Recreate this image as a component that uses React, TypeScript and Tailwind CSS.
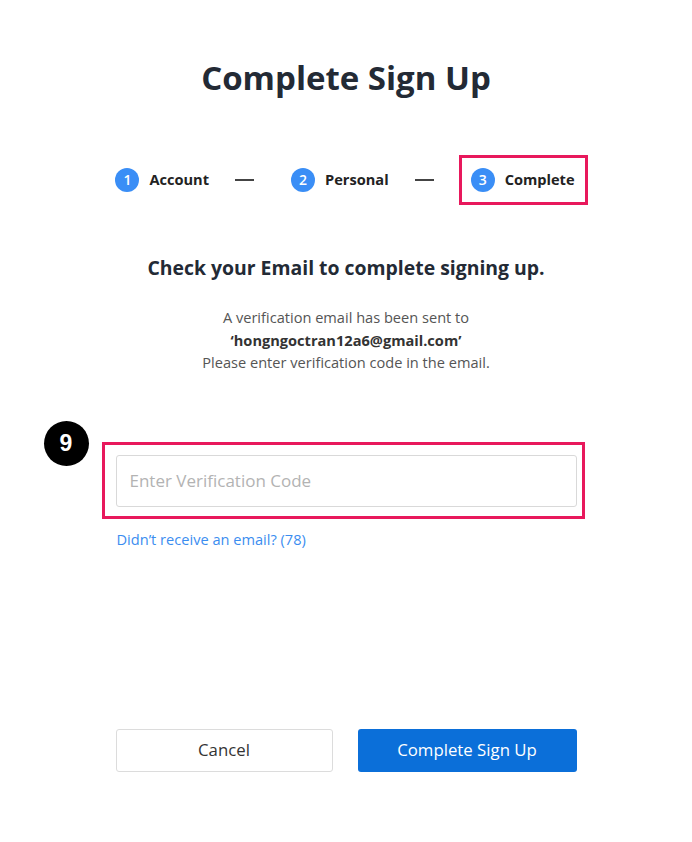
import React from "react";

const steps = [
    { n: 1, label: "Account" },
    { n: 2, label: "Personal" },
    { n: 3, label: "Complete" },
];

function StepBadge({ n }: { n: number }) {
    return (
        <span className="flex h-6 w-6 items-center justify-center rounded-full bg-[#3a8ef6] text-[14px] font-semibold leading-none text-white">
            {n}
        </span>
    );
}

export default function App() {
    return (
        <div className="min-h-[842px] w-full bg-white font-['Open_Sans',sans-serif] text-[#232a35]">
            <div className="mx-auto flex w-[461px] flex-col items-center pt-[58px]">
                <h1 className="text-[33px] font-bold leading-[40px] text-[#232a35]">Complete Sign Up</h1>

                {/* Stepper */}
                <div className="mt-[70px] flex h-6 items-center pr-[2px] text-[14.6px] font-bold text-[#222]">
                    {steps.map((s, i) => (
                        <React.Fragment key={s.n}>
                            {s.n === 3 ? (
                                <div className="relative flex items-center gap-[10px]">
                                    <StepBadge n={s.n} />
                                    <span>{s.label}</span>
                                    <div className="pointer-events-none absolute -left-[12px] -right-[13px] -top-[13px] -bottom-[13px] border-[3px] border-[#e8185c]" />
                                </div>
                            ) : (
                                <div className="flex items-center gap-[10px]">
                                    <StepBadge n={s.n} />
                                    <span>{s.label}</span>
                                </div>
                            )}
                            {i < steps.length - 1 && (
                                <span className="ml-[26px] mr-[37px] h-[1.5px] w-[19px] bg-[#444]" />
                            )}
                        </React.Fragment>
                    ))}
                </div>

                <h2 className="mt-[63px] text-[19.4px] font-bold leading-[26px] text-[#232a35]">
                    Check your Email to complete signing up.
                </h2>

                <div className="mt-[25px] text-center text-[14.6px] leading-[22.5px] text-[#555]">
                    <p>A verification email has been sent to</p>
                    <p className="font-bold text-[#333]">‘hongngoctran12a6@gmail.com’</p>
                    <p>Please enter verification code in the email.</p>
                </div>

                {/* Verification input */}
                <div className="relative mt-[81px] w-full">
                    <input
                        className="h-[52px] w-full rounded-[3px] border border-[#d9d9d9] px-[13px] text-[17px] text-[#333] outline-none placeholder:text-[#b3b3b3]"
                        placeholder="Enter Verification Code"
                    />
                    <div className="pointer-events-none absolute -left-[14px] -right-[8px] -top-[13px] -bottom-[12px] border-[3px] border-[#e8185c]" />
                    <div className="absolute -left-[72px] -top-[34px] flex h-[45px] w-[45px] items-center justify-center rounded-full bg-black font-['Liberation_Sans',sans-serif] text-[23px] font-bold text-white">
                        9
                    </div>
                </div>

                <a className="mt-[22px] self-start pl-[1px] text-[14.6px] leading-[20px] text-[#3b8df0]" href="#">
                    Didn’t receive an email? (78)
                </a>

                {/* Actions */}
                <div className="mt-[180px] flex w-full gap-[25px]">
                    <button className="h-[43px] w-[217px] rounded-[3px] border border-[#dcdcdc] bg-white text-[16.8px] text-[#333]">
                        Cancel
                    </button>
                    <button className="h-[43px] flex-1 rounded-[3px] bg-[#0b6fd9] text-[16.8px] text-white">
                        Complete Sign Up
                    </button>
                </div>
            </div>
        </div>
    );
}
